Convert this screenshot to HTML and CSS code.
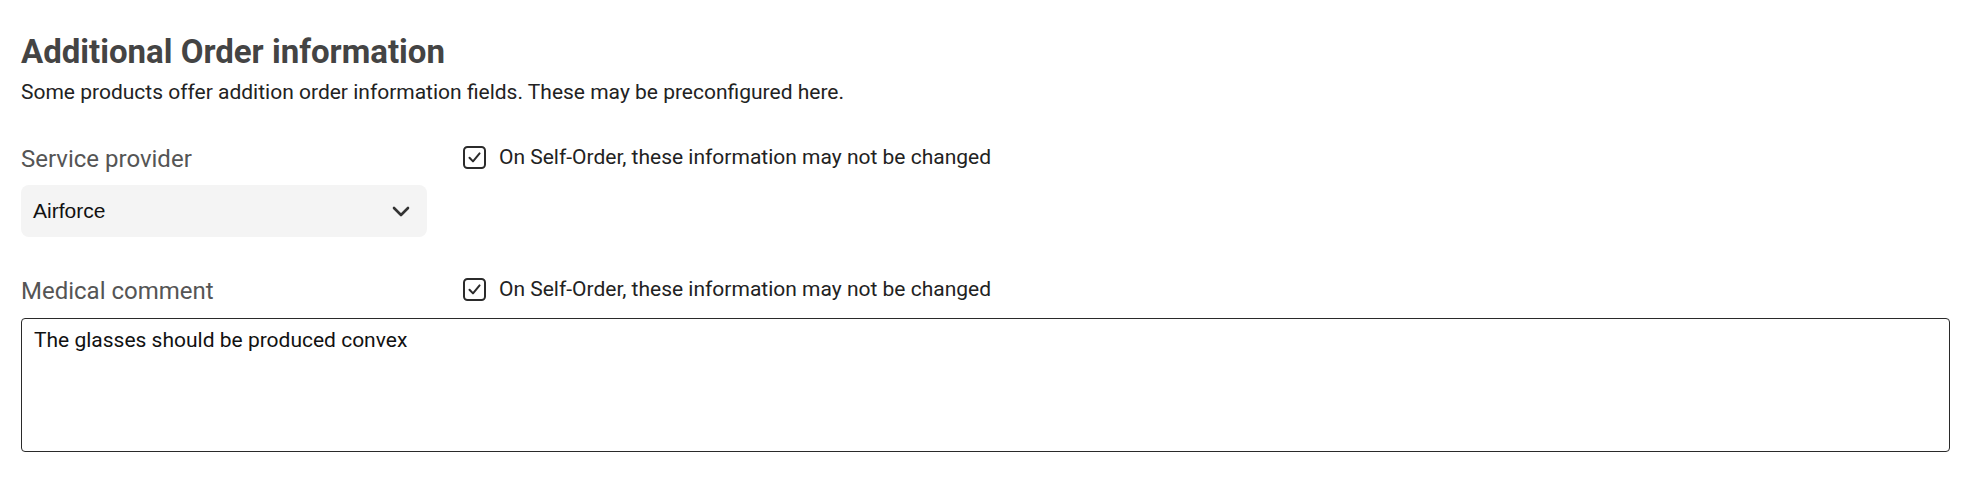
FILE: index.html
```html
<!DOCTYPE html>
<html lang="en">
<head>
    <meta charset="UTF-8">
    <meta name="viewport" content="width=device-width, initial-scale=1.0">
    <title>Additional Order information</title>
    <link rel="stylesheet" href="styles.css">
</head>
<body>

    <section class="order-info">
        <h1>Additional Order information</h1>
        <p class="subtitle">Some products offer addition order information fields. These may be preconfigured here.</p>

        <!-- Service provider -->
        <div class="field">
            <div class="field-head">
                <label class="field-label">Service provider</label>
                <label class="lock-option">
                    <svg class="checkbox" width="23" height="23" viewBox="0 0 23 23">
                        <rect x="1" y="1" width="21" height="21" rx="3.5" fill="none" stroke="#2b2b2b" stroke-width="2"/>
                        <path d="M6.5 11.8 L10 15.4 L16.6 7.4" fill="none" stroke="#2b2b2b" stroke-width="2" stroke-linecap="round" stroke-linejoin="round"/>
                    </svg>
                    On Self-Order, these information may not be changed
                </label>
            </div>
            <div class="select">
                <span>Airforce</span>
                <svg width="18" height="11" viewBox="0 0 18 11">
                    <path d="M2 2 L9 9 L16 2" fill="none" stroke="#333" stroke-width="2.6" stroke-linecap="round" stroke-linejoin="round"/>
                </svg>
            </div>
        </div>

        <!-- Medical comment -->
        <div class="field">
            <div class="field-head">
                <label class="field-label" for="medical">Medical comment</label>
                <label class="lock-option">
                    <svg class="checkbox" width="23" height="23" viewBox="0 0 23 23">
                        <rect x="1" y="1" width="21" height="21" rx="3.5" fill="none" stroke="#2b2b2b" stroke-width="2"/>
                        <path d="M6.5 11.8 L10 15.4 L16.6 7.4" fill="none" stroke="#2b2b2b" stroke-width="2" stroke-linecap="round" stroke-linejoin="round"/>
                    </svg>
                    On Self-Order, these information may not be changed
                </label>
            </div>
            <textarea id="medical" class="comment">The glasses should be produced convex</textarea>
        </div>
    </section>

</body>
</html>
```

FILE: styles.css
```css
body {
    margin: 0;
    background-color: #fff;
    font-family: Roboto, "Liberation Sans", Arial, sans-serif;
    color: #222;
}
.order-info {
    padding: 33px 26px 0 21px;
}
h1 {
    margin: 0;
    font-size: 33px;
    line-height: 38px;
    font-weight: 700;
    color: #444;
}
.subtitle {
    margin: 9px 0 0;
    font-size: 21px;
    line-height: 24px;
    color: #222;
}
.field {
    margin-top: 41px;
}
.field + .field {
    margin-top: 40px;
}
.field-head {
    display: flex;
    align-items: flex-start;
}
.field-label {
    width: 442px;
    font-size: 24px;
    line-height: 28px;
    color: #555;
}
.lock-option {
    display: flex;
    align-items: center;
    gap: 13px;
    font-size: 21px;
    line-height: 24px;
    color: #222;
}
.checkbox {
    flex-shrink: 0;
}
.select {
    display: flex;
    align-items: center;
    justify-content: space-between;
    box-sizing: border-box;
    width: 406px;
    height: 52px;
    margin-top: 12px;
    padding: 0 17px 0 12px;
    background-color: #f4f4f4; /* fondo gris claro */
    border-radius: 8px;
    font-family: "Liberation Sans", Arial, sans-serif;
    font-size: 21px;
    color: #111;
}
.comment {
    display: block;
    box-sizing: border-box;
    width: 100%;
    height: 134px;
    margin-top: 13px;
    padding: 9px 12px;
    border: 1.5px solid #2a2a2a;
    border-radius: 4px;
    resize: none;
    font-family: Roboto, "Liberation Sans", Arial, sans-serif;
    font-size: 21px;
    line-height: 24px;
    color: #111;
}
```
